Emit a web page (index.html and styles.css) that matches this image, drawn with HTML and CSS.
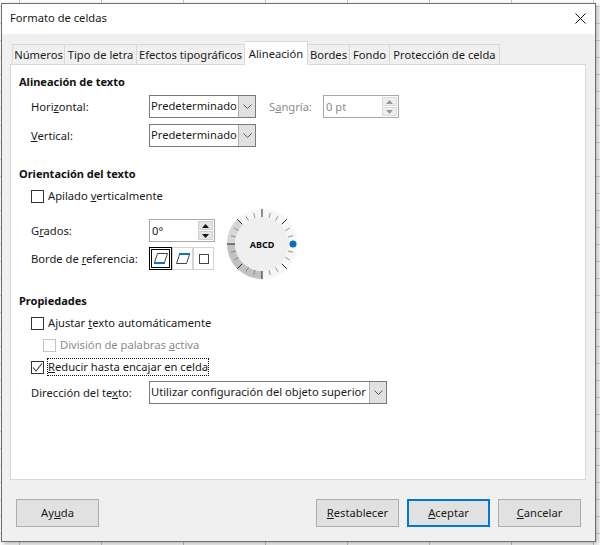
FILE: index.html
```html
<!DOCTYPE html>
<html lang="es">
<head>
<meta charset="utf-8">
<title>Formato de celdas</title>
<link rel="stylesheet" href="styles.css">
</head>
<body>
<div class="dialog">
  <header class="titlebar">
    <span class="title">Formato de celdas</span>
    <svg class="close" width="11" height="11" viewBox="0 0 11 11"><path d="M.5.5l10 10M10.500.5l-10 10" stroke="#111" stroke-width="1" fill="none"/></svg>
  </header>
  <div class="content">
    <div class="tabs">
      <span class="tab t1">Números</span>
      <span class="tab t2">Tipo de letra</span>
      <span class="tab t3">Efectos tipográficos</span>
      <span class="tab t4 active">Alineación</span>
      <span class="tab t5">Bordes</span>
      <span class="tab t6">Fondo</span>
      <span class="tab t7">Protección de celda</span>
    </div>
    <main class="panel">
      <h2 class="head h-a">Alineación de texto</h2>
      <div class="row r-h">
        <label class="lbl">Hori<u>z</u>ontal:</label>
        <div class="select w-pre"><span class="sel-text">Predeterminado</span><span class="arrow"><svg width="9" height="5" viewBox="0 0 9 5"><path d="M.5.5l4 4 4-4" stroke="#555" fill="none"/></svg></span></div>
        <label class="lbl-s">S<u>a</u>ngría:</label>
        <div class="spin-off"><span class="spin-text">0 pt</span>
          <span class="spin-btns"><span class="sb"><svg width="7" height="4" viewBox="0 0 7 4"><path d="M3.5 0L7 4H0z" fill="#999"/></svg></span><span class="sb"><svg width="7" height="4" viewBox="0 0 7 4"><path d="M0 0h7L3.500 4z" fill="#999"/></svg></span></span>
        </div>
      </div>
      <div class="row r-v">
        <label class="lbl"><u>V</u>ertical:</label>
        <div class="select w-pre"><span class="sel-text">Predeterminado</span><span class="arrow"><svg width="9" height="5" viewBox="0 0 9 5"><path d="M.5.5l4 4 4-4" stroke="#555" fill="none"/></svg></span></div>
      </div>

      <h2 class="head h-o">Orientación del texto</h2>
      <div class="check-row c-apilado"><span class="box"></span><span>Apilado <u>v</u>erticalmente</span></div>
      <div class="orient">
        <div class="orient-left">
          <div class="row r-g">
            <label class="lbl">G<u>r</u>ados:</label>
            <div class="spin"><span class="spin-text dark">0°</span>
              <span class="spin-btns"><span class="sb"><svg width="7" height="4" viewBox="0 0 7 4"><path d="M3.5 0L7 4H0z" fill="#111"/></svg></span><span class="sb"><svg width="7" height="4" viewBox="0 0 7 4"><path d="M0 0h7L3.500 4z" fill="#111"/></svg></span></span>
            </div>
          </div>
          <div class="row r-b">
            <label class="lbl">Borde de <u>r</u>eferencia:</label>
            <div class="edges">
              <span class="edge sel"><svg width="14" height="11" viewBox="0 0 14 11"><path d="M3.500.5h10l-3 9H.5z" fill="none" stroke="#444"/><path d="M0 10h11" stroke="#0a74c9" stroke-width="2"/></svg></span>
              <span class="edge"><svg width="14" height="11" viewBox="0 0 14 11"><path d="M3.500 1.500h10l-3 9H.5z" fill="none" stroke="#444"/><path d="M3 1h11" stroke="#0a74c9" stroke-width="2"/></svg></span>
              <span class="edge"><svg width="10" height="10" viewBox="0 0 10 10"><rect x=".5" y=".5" width="9" height="9" fill="none" stroke="#444"/></svg></span>
            </div>
          </div>
        </div>
        <div class="dial">
          <svg width="72" height="72" viewBox="-36 -36 72 72">
            <circle r="35.500" fill="#f7f7f7"/>
            <path d="M-24.700-24.700A35 35 0 0 0-35 0H-27A27 27 0 0 1-19-19z" fill="#d6d6d6"/>
            <path d="M-35 0A35 35 0 0 0 0 35V27A27 27 0 0 1-27 0z" fill="#c2c2c2"/>
            <circle r="27" fill="#efefef"/>
            <g stroke="#222" stroke-width="1">
              <path d="M0-35V-27M0 35V27M-35 0H-27"/>
              <path d="M-24.700-24.700L-19.800-19.800M24.700-24.700L19.800-19.800M-24.700 24.700L-19.800 19.800M24.700 24.700L19.800 19.800"/>
            </g>
            <g stroke="#777" stroke-width=".8">
              <path d="M8.300-31L7-26.100M16-27.700L13.500-23.400M27.700-16L23.400-13.500M31-8.300L26.100-7M31 8.300L26.100 7M27.700 16L23.400 13.500M16 27.700L13.500 23.400M8.300 31L7 26.100"/>
              <path d="M-8.300-31L-7-26.100M-16-27.700L-13.500-23.400M-27.700-16L-23.400-13.500M-31-8.300L-26.100-7M-31 8.300L-26.100 7M-27.700 16L-23.400 13.500M-16 27.700L-13.500 23.400M-8.300 31L-7 26.100"/>
            </g>
            <circle cx="31" cy="0" r="3.500" fill="#0a6cc4"/>
            <text x="0" y="3.500" text-anchor="middle" class="dial-text">ABCD</text>
          </svg>
        </div>
      </div>

      <h2 class="head h-p">Propiedades</h2>
      <div class="check-row c-a"><span class="box"></span><span>Ajustar <u>t</u>exto automáticamente</span></div>
      <div class="check-row c-d off"><span class="box"></span><span>División de palabras <u>a</u>ctiva</span></div>
      <div class="check-row c-r"><span class="box"><svg width="13" height="13" viewBox="0 0 13 13"><path d="M2 6.500l3 3.500 6-7.500" stroke="#333" stroke-width="1.100" fill="none"/></svg></span><span class="focus"><u>R</u>educir hasta encajar en celda</span></div>
      <div class="row r-d">
        <label class="lbl">Dirección del te<u>x</u>to:</label>
        <div class="select w-dir"><span class="sel-text">Utilizar configuración del objeto superior</span><span class="arrow"><svg width="9" height="5" viewBox="0 0 9 5"><path d="M.5.5l4 4 4-4" stroke="#555" fill="none"/></svg></span></div>
      </div>
    </main>
    <footer class="actions">
      <button class="btn">Ay<u>u</u>da</button>
      <span class="spacer"></span>
      <button class="btn"><u>R</u>establecer</button>
      <button class="btn primary"><u>A</u>ceptar</button>
      <button class="btn"><u>C</u>ancelar</button>
    </footer>
  </div>
</div>
</body>
</html>
```
FILE: styles.css
```css
* { box-sizing: border-box; }
html, body { margin: 0; height: 100%; }
body {
  width: 600px;
  height: 545px;
  overflow: hidden;
  padding: 3px 0 0 1px;
  font: 11.2px/16px "Noto Sans", sans-serif;
  color: #1a1a1a;
  background-color: #fff;
  background-image:
    linear-gradient(to right, #c6c6c6 1px, transparent 1px),
    linear-gradient(to bottom, #d4d4d4 1px, transparent 1px);
  background-size: 82px 100%, 100% 17px;
  background-position: 19px 0, 0 6px;
}
.dialog {
  width: 595px;
  height: 539px;
  border: 1px solid #6e6e6e;
  background: #f0f0f0;
  display: flex;
  flex-direction: column;
  box-shadow: 2px 2px 5px rgba(0,0,0,.3);
}
.titlebar {
  height: 30px;
  flex: none;
  background: #fff;
  display: flex;
  align-items: center;
  justify-content: space-between;
  padding: 0 9px 2px 8px;
}
.content { flex: 1; padding: 8px 0 0 8px; display: flex; flex-direction: column; }
.tabs { display: flex; align-items: flex-end; height: 23px; flex: none; padding-left: 2px; position: relative; z-index: 1; margin-bottom: -1px; }
.tab {
  height: 21px;
  border: 1px solid #d9d9d9;
  border-left-width: 0;
  background: #f0f0f0;
  text-align: center;
  line-height: 20px;
  white-space: nowrap;
}
.t1 { width: 53px; border-left-width: 1px; }
.t2 { width: 72px; }
.t3 { width: 108px; }
.t4 { width: 63px; }
.t5 { width: 42px; }
.t6 { width: 40px; }
.t7 { width: 110px; }
.tab.active { height: 24px; background: #fff; border-bottom-color: #fff; line-height: 23px; margin-bottom: 0; }
.panel {
  width: 576px;
  height: 416px;
  flex: none;
  background: #fff;
  border: 1px solid #d9d9d9;
  padding: 0 0 0 8px;
  display: flex;
  flex-direction: column;
}
.head { font-size: 11px; line-height: 16px; font-weight: 700; margin: 0; color: #111; }
.h-a { margin-top: 9px; }
.h-o { margin-top: 19px; }
.h-p { margin-top: 11px; }
.row { display: flex; align-items: center; padding-left: 12px; }
.lbl { width: 118px; flex: none; white-space: nowrap; }
.r-h { margin-top: 5px; height: 23px; }
.r-v { margin-top: 6px; height: 23px; }
.select {
  height: 23px;
  border: 1px solid #7a7a7a;
  background: #fff;
  display: flex;
  align-items: stretch;
}
.w-pre { width: 107px; }
.w-dir { width: 238px; }
.sel-text { flex: 1; padding-left: 1px; line-height: 20px; white-space: nowrap; overflow: hidden; }
.arrow { width: 17px; flex: none; background: #e1e1e1; border-left: 1px solid #adadad; display: flex; align-items: center; justify-content: center; }
.lbl-s { color: #8c8c8c; margin-left: 13px; width: 54px; white-space: nowrap; }
.spin-off, .spin {
  height: 23px;
  border: 1px solid #a8a8a8;
  background: #fff;
  display: flex;
  align-items: center;
  justify-content: space-between;
}
.spin-off { width: 76px; color: #8c8c8c; }
.spin { width: 66px; }
.spin-text { padding-left: 2px; }
.spin-btns { display: flex; flex-direction: column; gap: 1px; padding-right: 1px; height: 19px; }
.sb { width: 15px; height: 9px; background: #eee; border: 1px solid #d9d9d9; display: flex; align-items: center; justify-content: center; }
.spin .sb { background: #e4e4e4; border-color: #cfcfcf; }
.check-row { display: flex; align-items: center; gap: 4px; padding-left: 12px; height: 16px; white-space: nowrap; }
.box { width: 13px; height: 13px; border: 1px solid #333; background: #fff; flex: none; display: block; }
.box svg { display: block; margin: -1px; }
.c-apilado { margin-top: 6px; }
.orient { display: flex; margin-top: 6px; height: 72px; }
.orient-left { width: 200px; flex: none; display: flex; flex-direction: column; }
.r-g { margin-top: 9px; height: 23px; }
.r-b { margin-top: 5px; height: 23px; }
.edges { display: flex; background: #f0f0f0; }
.edge { width: 21px; height: 23px; border: 1px solid #d4d4d4; display: flex; align-items: center; justify-content: center; background: #fff; }
.edge.sel { border: 3px double #000; width: 23px; }
.dial { width: 72px; height: 72px; flex: none; margin: -2px 0 0 7px; }
.dial svg { display: block; }
.dial-text { font: 700 9px "Noto Sans", sans-serif; fill: #111; }
.c-a { margin-top: 6px; }
.c-d { margin-top: 6px; padding-left: 24px; color: #8c8c8c; }
.c-d .box { border-color: #c4c4c4; }
.c-r { margin-top: 6px; }
.focus { outline: 1px dotted #111; outline-offset: 0; }
.r-d { margin-top: 6px; height: 23px; }
.actions { display: flex; align-items: center; gap: 8px; margin-top: 19px; padding-left: 6px; width: 571px; }
.spacer { flex: 1; }
.btn {
  width: 83px;
  height: 28px;
  border: 1px solid #adadad;
  background: #e1e1e1;
  font: inherit;
  color: inherit;
  padding: 0;
}
.primary { border: 2px solid #0078d7; }
```
